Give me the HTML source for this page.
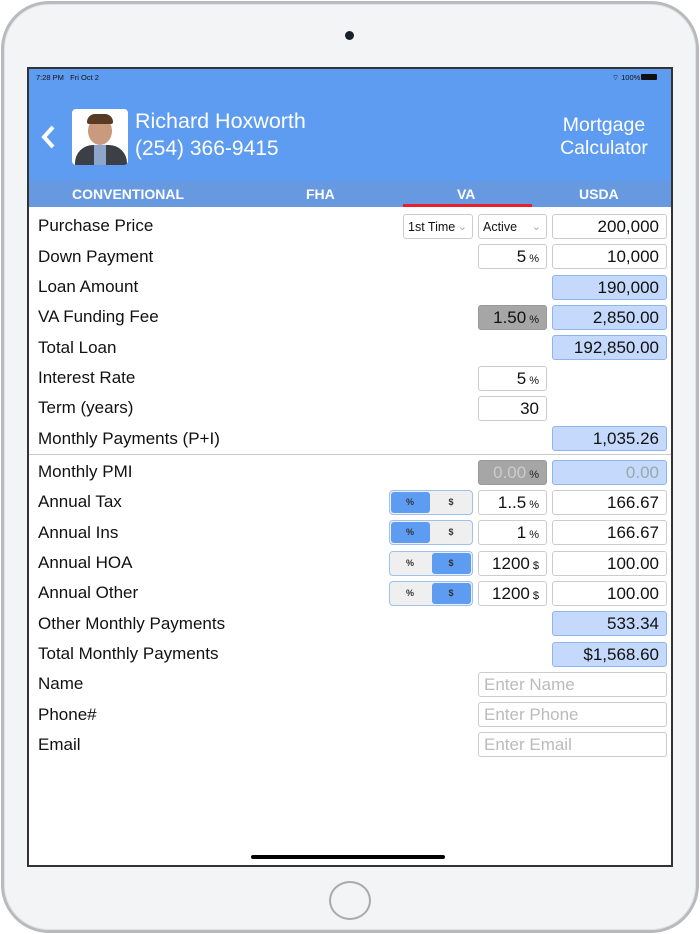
<!DOCTYPE html>
<html><head><meta charset="utf-8"><style>
*{margin:0;padding:0;box-sizing:border-box}
body{width:700px;height:934px;background:#fff;font-family:"Liberation Sans",sans-serif;position:relative;overflow:hidden}
.ipad{position:absolute;left:1px;top:1px;width:698px;height:932px;border-radius:48px;background:#f3f4f6;border:3px solid #b9babd;box-shadow:inset 0 0 0 1px #e2e3e5}
.screen{position:absolute;left:27px;top:67px;width:646px;height:800px;border:2px solid #333;background:#fff;overflow:hidden}
.hdr{position:absolute;left:0;top:0;width:642px;height:112px;background:#5e9cf1}
.tabs{position:absolute;left:0;top:112px;width:642px;height:26px;background:#6699e0;color:#fff;font-weight:bold;font-size:14px}
.tabs span{position:absolute;top:5px}
.a{position:absolute}
.lbl{position:absolute;left:9px;font-size:17px;color:#111;white-space:nowrap}
.f{position:absolute;height:25px;border:1px solid #ccc;border-radius:3px;background:#fff;text-align:right;font-size:17px;padding:2px 7px 0 0;color:#111;white-space:nowrap}
.blue{background:#c4d9fb;border-color:#8fb5ee}
.gray{background:#a6a6a6;border-color:#999}
.pc{font-size:11px;margin-left:3px}
.tg{position:absolute;left:360px;width:84px;height:25px;border:1px solid #9fc0f0;border-radius:4px;background:#efefef;font-size:9px;font-weight:bold}
.tg i{position:absolute;top:1px;width:39px;height:21px;background:#5e9cf1;border-radius:3px}
.tg b{position:absolute;top:6px;width:40px;text-align:center;font-weight:bold;color:#333}
.ph{color:#bbb;text-align:left;padding-left:5px}
.dd{font-size:12.5px;text-align:left;padding:5px 0 0 4px}
.dd s{position:absolute;right:5px;top:5px;text-decoration:none;color:#aaa;font-size:11px}
</style></head><body>
<div class="ipad"></div>
<div class="a" style="left:345px;top:31px;width:9px;height:9px;border-radius:50%;background:#1a2030"></div>
<div class="a" style="left:329px;top:881px;width:42px;height:39px;border-radius:50%;border:2px solid #aaa;background:#f3f4f6"></div>
<div class="screen">
 <div class="hdr">
  <div class="a" style="left:7px;top:4px;font-size:7.5px;color:#111">7:28 PM &nbsp; Fri Oct 2</div>
  <div class="a" style="left:583px;top:4px;font-size:7.5px;color:#111">⌔ 100%</div>
  <div class="a" style="left:612px;top:5px;width:16px;height:6px;background:#111;border-radius:1px"></div>
  <svg class="a" style="left:10px;top:55px" width="18" height="28"><path d="M14 3 L5 13 L14 23" stroke="#fff" stroke-width="4" fill="none"/></svg>
  <div class="a" style="left:43px;top:40px;width:56px;height:56px;border-radius:4px;background:#fff;overflow:hidden">
   <div class="a" style="left:16px;top:8px;width:24px;height:28px;border-radius:50%;background:#c99a7e"></div>
   <div class="a" style="left:15px;top:5px;width:26px;height:10px;border-radius:12px 12px 3px 3px;background:#5a3a24"></div>
   <div class="a" style="left:3px;top:36px;width:52px;height:24px;border-radius:18px 18px 0 0;background:#3c3f45"></div>
   <div class="a" style="left:22px;top:36px;width:12px;height:20px;background:#8ea5cc"></div>
  </div>
  <div class="a" style="left:106px;top:40px;font-size:21.5px;color:#fff">Richard Hoxworth</div>
  <div class="a" style="left:106px;top:68px;font-size:21px;color:#fff">(254) 366-9415</div>
  <div class="a" style="left:520px;top:45px;width:110px;text-align:center;font-size:19.5px;color:#fff;line-height:23px">Mortgage<br>Calculator</div>
 </div>
 <div class="tabs"><span style="left:43px">CONVENTIONAL</span><span style="left:277px">FHA</span><span style="left:428px">VA</span><span style="left:550px">USDA</span>
  <div class="a" style="left:374px;top:23px;width:129px;height:3px;background:#e8202a"></div></div>
 <div class="lbl" style="top:147px">Purchase Price</div>
 <div class="f dd" style="left:374px;top:145px;width:70px">1st Time<s>⌄</s></div>
 <div class="f dd" style="left:449px;top:145px;width:69px">Active<s>⌄</s></div>
 <div class="f" style="left:523px;top:145px;width:115px">200,000</div>
 <div class="lbl" style="top:178px">Down Payment</div>
 <div class="f" style="left:449px;top:175px;width:69px">5<span class="pc">%</span></div>
 <div class="f" style="left:523px;top:175px;width:115px">10,000</div>
 <div class="lbl" style="top:208px">Loan Amount</div>
 <div class="f blue" style="left:523px;top:206px;width:115px">190,000</div>
 <div class="lbl" style="top:238px">VA Funding Fee</div>
 <div class="f gray" style="left:449px;top:236px;width:69px">1.50<span class="pc">%</span></div>
 <div class="f blue" style="left:523px;top:236px;width:115px">2,850.00</div>
 <div class="lbl" style="top:269px">Total Loan</div>
 <div class="f blue" style="left:523px;top:266px;width:115px">192,850.00</div>
 <div class="lbl" style="top:299px">Interest Rate</div>
 <div class="f" style="left:449px;top:297px;width:69px">5<span class="pc">%</span></div>
 <div class="lbl" style="top:329px">Term (years)</div>
 <div class="f" style="left:449px;top:327px;width:69px">30</div>
 <div class="lbl" style="top:360px">Monthly Payments (P+I)</div>
 <div class="f blue" style="left:523px;top:357px;width:115px">1,035.26</div>
 <div class="a" style="left:0;top:385px;width:642px;height:1px;background:#ccc"></div>
 <div class="lbl" style="top:393px">Monthly PMI</div>
 <div class="f gray" style="left:449px;top:391px;width:69px;color:#ccc">0.00<span class="pc" style="color:#222">%</span></div>
 <div class="f blue" style="left:523px;top:391px;width:115px;color:#9aa">0.00</div>
 <div class="lbl" style="top:423px">Annual Tax</div>
 <div class="tg" style="top:421px"><i style="left:1px"></i><b style="left:0">%</b><b style="left:41px">$</b></div>
 <div class="f" style="left:449px;top:421px;width:69px">1..5<span class="pc">%</span></div>
 <div class="f" style="left:523px;top:421px;width:115px">166.67</div>
 <div class="lbl" style="top:454px">Annual Ins</div>
 <div class="tg" style="top:451px"><i style="left:1px"></i><b style="left:0">%</b><b style="left:41px">$</b></div>
 <div class="f" style="left:449px;top:451px;width:69px">1<span class="pc">%</span></div>
 <div class="f" style="left:523px;top:451px;width:115px">166.67</div>
 <div class="lbl" style="top:484px">Annual HOA</div>
 <div class="tg" style="top:482px"><i style="left:42px"></i><b style="left:0">%</b><b style="left:41px">$</b></div>
 <div class="f" style="left:449px;top:482px;width:69px">1200<span class="pc">$</span></div>
 <div class="f" style="left:523px;top:482px;width:115px">100.00</div>
 <div class="lbl" style="top:514px">Annual Other</div>
 <div class="tg" style="top:512px"><i style="left:42px"></i><b style="left:0">%</b><b style="left:41px">$</b></div>
 <div class="f" style="left:449px;top:512px;width:69px">1200<span class="pc">$</span></div>
 <div class="f" style="left:523px;top:512px;width:115px">100.00</div>
 <div class="lbl" style="top:545px">Other Monthly Payments</div>
 <div class="f blue" style="left:523px;top:542px;width:115px">533.34</div>
 <div class="lbl" style="top:575px">Total Monthly Payments</div>
 <div class="f blue" style="left:523px;top:573px;width:115px">$1,568.60</div>
 <div class="lbl" style="top:605px">Name</div>
 <div class="f ph" style="left:449px;top:603px;width:189px">Enter Name</div>
 <div class="lbl" style="top:636px">Phone#</div>
 <div class="f ph" style="left:449px;top:633px;width:189px">Enter Phone</div>
 <div class="lbl" style="top:666px">Email</div>
 <div class="f ph" style="left:449px;top:663px;width:189px">Enter Email</div>
 <div class="a" style="left:222px;top:786px;width:194px;height:4px;border-radius:2px;background:#000"></div>
</div>
</body></html>
